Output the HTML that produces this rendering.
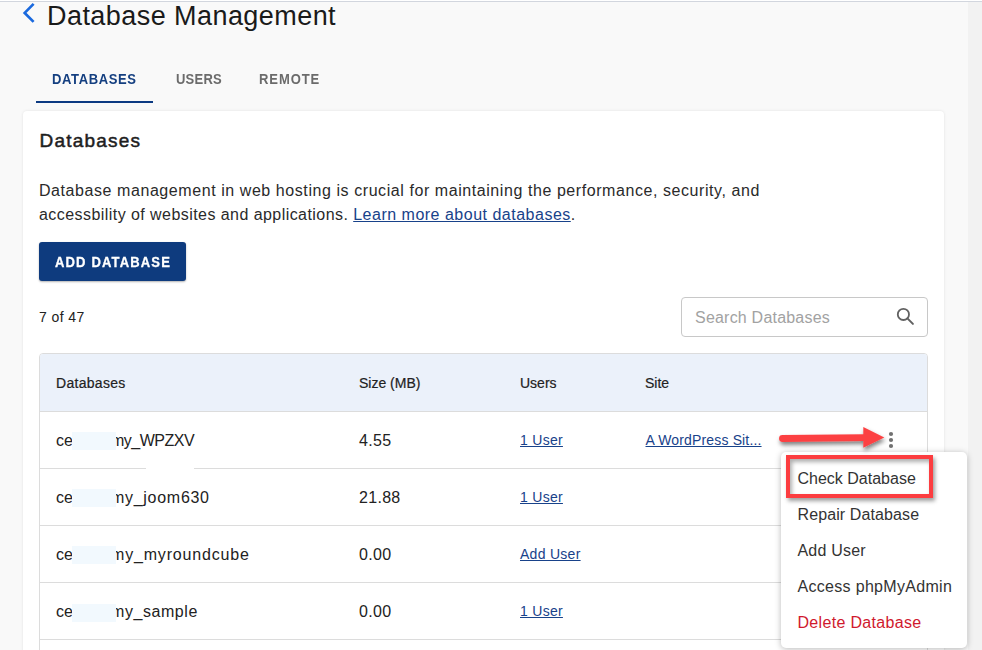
<!DOCTYPE html>
<html><head><meta charset="utf-8">
<style>
*{margin:0;padding:0;box-sizing:border-box}
html,body{width:982px;height:650px;overflow:hidden;background:#f9f9f9;font-family:"Liberation Sans",sans-serif;color:#222}
.a{position:absolute;white-space:nowrap;line-height:1}
#topline{position:absolute;left:0;top:0;width:982px;height:1px;background:#fff}
#topline2{position:absolute;left:0;top:1px;width:982px;height:1px;background:#d2d6de}
#track{position:absolute;left:968px;top:2px;width:14px;height:648px;background:#f2f2f2}
.card{position:absolute;left:23px;top:111px;width:921px;height:600px;background:#fff;border-radius:4px;box-shadow:0 0 3px rgba(0,0,0,.10)}
.btn{position:absolute;left:39px;top:242px;width:147px;height:39px;background:#0e3b7e;border-radius:3px;box-shadow:0 1px 2px rgba(0,0,0,.3)}
.search{position:absolute;left:681px;top:297px;width:247px;height:40px;border:1px solid #c8c8c8;border-radius:4px;background:#fff}
.tbl{position:absolute;left:39px;top:353px;width:889px;height:400px;border:1px solid #dcdcdc;border-radius:4px;background:#fff}
.thead{position:absolute;left:40px;top:354px;width:887px;height:57px;background:#ebf1fa;border-radius:3px 3px 0 0}
.hr{position:absolute;left:40px;width:887px;height:1px;background:#dcdcdc}
.red{position:absolute;background:#f2f9fe}
.link{color:#18428a;text-decoration:underline;text-underline-offset:1px}
.menu{position:absolute;left:781px;top:452px;width:186px;height:196px;background:#fff;border-radius:5px;box-shadow:0 1px 6px rgba(0,0,0,.28)}
.mi{color:#333;font-size:16px}
</style></head><body>
<div id="topline"></div><div id="topline2"></div>
<div id="track"></div>

<svg style="position:absolute;left:0;top:0" width="60" height="30"><polyline points="33.6,3.9 24.7,12.9 33.6,21.9" fill="none" stroke="#1a69de" stroke-width="2.7"/></svg>
<div class="a" id="title" style="left:47px;top:2.5px;font-size:27px;letter-spacing:.44px;color:#1a1a1a">Database Management</div>

<div class="a" id="tab1" style="left:52px;top:72px;font-size:14px;font-weight:bold;color:#143f80;letter-spacing:.65px;transform:scaleX(.93);transform-origin:0 0">DATABASES</div>
<div class="a" id="tab2" style="left:176px;top:72px;font-size:14px;font-weight:bold;color:#6b6b6b;letter-spacing:.22px;transform:scaleX(.93);transform-origin:0 0">USERS</div>
<div class="a" id="tab3" style="left:259px;top:72px;font-size:14px;font-weight:bold;color:#6b6b6b;letter-spacing:.98px;transform:scaleX(.93);transform-origin:0 0">REMOTE</div>
<div style="position:absolute;left:36px;top:101px;width:117px;height:2px;background:#0c3a82"></div>

<div class="card"></div>
<div class="a" id="h2" style="left:39.5px;top:131.1px;font-size:19px;letter-spacing:1.2px;color:#1e1e1e;-webkit-text-stroke:.5px #1e1e1e">Databases</div>
<div class="a" id="p1" style="left:39px;top:182.6px;font-size:16px;letter-spacing:.57px;color:#2a2a2a">Database management in web hosting is crucial for maintaining the performance, security, and</div>
<div class="a" id="p2" style="left:39px;top:206.6px;font-size:16px;letter-spacing:.57px;color:#2a2a2a"><span style="letter-spacing:.44px">accessbility of websites and applications. </span><span class="link" id="lnk" style="letter-spacing:.5px;text-underline-offset:1px">Learn more about databases</span>.</div>

<div class="btn"></div>
<div class="a" id="btnt" style="left:55px;top:255px;font-size:14px;font-weight:bold;color:#fff;letter-spacing:1.23px;transform:scaleX(.93);-webkit-text-stroke:.3px #fff;transform-origin:0 0">ADD DATABASE</div>

<div class="a" id="cnt" style="left:39px;top:310px;font-size:14px;letter-spacing:.4px;color:#222">7 of 47</div>

<div class="search"></div>
<div class="a" id="ph" style="left:695px;top:309.5px;font-size:16px;letter-spacing:.21px;color:#a2a2a2">Search Databases</div>
<svg style="position:absolute;left:895px;top:307px" width="22" height="22"><circle cx="8.4" cy="7.4" r="5.6" fill="none" stroke="#616161" stroke-width="1.8"/><line x1="12.4" y1="11.4" x2="17.9" y2="16.9" stroke="#616161" stroke-width="2" stroke-linecap="round"/></svg>

<div class="tbl"></div>
<div class="thead"></div>
<div class="hr" style="top:411px"></div>
<div class="hr" style="top:468px"></div>
<div style="position:absolute;left:146px;top:468px;width:48px;height:1px;background:#fff"></div>
<div class="hr" style="top:525px"></div>
<div class="hr" style="top:582px"></div>
<div class="hr" style="top:639px"></div>

<div class="a" id="th1" style="-webkit-text-stroke:.2px #222;left:56px;top:376px;font-size:14px;letter-spacing:.3px;color:#222">Databases</div>
<div class="a" id="th2" style="-webkit-text-stroke:.2px #222;left:359px;top:376px;font-size:14px;color:#222">Size (MB)</div>
<div class="a" id="th3" style="-webkit-text-stroke:.2px #222;left:520px;top:376px;font-size:14px;color:#222">Users</div>
<div class="a" id="th4" style="-webkit-text-stroke:.2px #222;left:645px;top:376px;font-size:14px;color:#222">Site</div>

<div class="a" style="left:56px;top:432.9px;font-size:16px">ce</div>
<div class="a" id="r1" style="letter-spacing:-.51px;left:111px;top:432.9px;font-size:16px">my_WPZXV</div>
<div class="a" style="left:56px;top:489.9px;font-size:16px">ce</div>
<div class="a" id="r2" style="letter-spacing:.71px;left:111px;top:489.9px;font-size:16px">my_joom630</div>
<div class="a" style="left:56px;top:546.9px;font-size:16px">ce</div>
<div class="a" id="r3" style="letter-spacing:.82px;left:111px;top:546.9px;font-size:16px">my_myroundcube</div>
<div class="a" style="left:56px;top:603.9px;font-size:16px">ce</div>
<div class="a" id="r4" style="letter-spacing:.56px;left:111px;top:603.9px;font-size:16px">my_sample</div>
<div class="red" style="left:72px;top:432px;width:44px;height:18px"></div>
<div class="red" style="left:72px;top:489px;width:44px;height:18px"></div>
<div class="red" style="left:72px;top:546px;width:44px;height:18px"></div>
<div class="red" style="left:72px;top:604px;width:44px;height:18px"></div>

<div class="a" id="s1" style="letter-spacing:.3px;left:359px;top:432.9px;font-size:16px">4.55</div>
<div class="a" id="s2" style="letter-spacing:.3px;left:359px;top:489.9px;font-size:16px">21.88</div>
<div class="a" id="s3" style="letter-spacing:.3px;left:359px;top:546.9px;font-size:16px">0.00</div>
<div class="a" id="s4" style="letter-spacing:.3px;left:359px;top:603.9px;font-size:16px">0.00</div>

<div class="a link" id="u1" style="letter-spacing:.28px;left:520px;top:433px;font-size:14px">1 User</div>
<div class="a link" id="u2" style="letter-spacing:.28px;left:520px;top:490px;font-size:14px">1 User</div>
<div class="a link" id="u3" style="letter-spacing:.28px;left:520px;top:547px;font-size:14px">Add User</div>
<div class="a link" id="u4" style="letter-spacing:.28px;left:520px;top:604px;font-size:14px">1 User</div>
<div class="a link" id="site" style="left:645.5px;top:433px;font-size:14px;letter-spacing:.15px">A WordPress Sit...</div>

<svg style="position:absolute;left:880px;top:428px" width="20" height="24"><circle cx="11" cy="6" r="2.1" fill="#717171"/><circle cx="11" cy="12" r="2.1" fill="#717171"/><circle cx="11" cy="18" r="2.1" fill="#717171"/></svg>

<div class="menu"></div>
<div class="a mi" id="m1" style="left:797.5px;top:470.5px">Check Database</div>
<div class="a mi" id="m2" style="left:797.5px;letter-spacing:.11px;top:506.5px">Repair Database</div>
<div class="a mi" id="m3" style="left:797.5px;letter-spacing:.2px;top:542.5px">Add User</div>
<div class="a mi" id="m4" style="left:797.5px;letter-spacing:.31px;top:578.5px">Access phpMyAdmin</div>
<div class="a mi" id="m5" style="left:797.5px;letter-spacing:.32px;top:614.5px;color:#d0192d">Delete Database</div>

<div style="position:absolute;left:786px;top:455px;width:147px;height:43px;border:4px solid #fc3d40;box-shadow:2px 3px 4px rgba(0,0,0,.38), inset 2px 3px 4px rgba(0,0,0,.32)"></div>

<svg style="position:absolute;left:770px;top:420px;overflow:visible" width="130" height="40">
<defs><filter id="sh" x="-20%" y="-50%" width="150%" height="250%"><feDropShadow dx="1" dy="3" stdDeviation="2" flood-color="#000" flood-opacity=".5"/></filter></defs>
<g filter="url(#sh)"><path d="M12.5,15 L93.3,14.2 L93.3,7 L114.3,17.5 L93.3,27.8 L93.3,21.1 L12.5,21.9 A3.45,3.45 0 0 1 12.5,15 Z" fill="#fc4143"/></g>
</svg>
</body></html>
